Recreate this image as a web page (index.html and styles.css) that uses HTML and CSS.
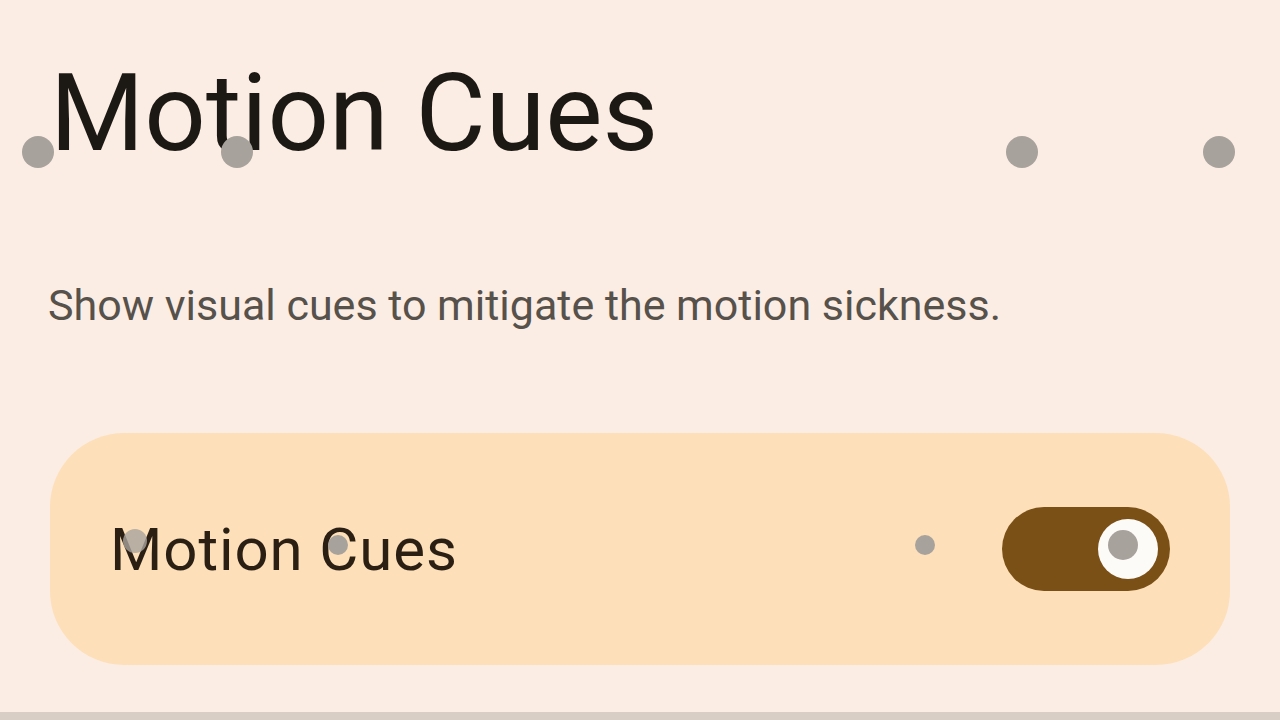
FILE: index.html
```html
<!DOCTYPE html>
<html lang="en">
<head>
    <meta charset="UTF-8">
    <meta name="viewport" content="width=device-width, initial-scale=1.0">
    <title>Motion Cues</title>
    <link rel="stylesheet" href="styles.css">
</head>
<body>
    <div class="screen">
        <h1 class="title">Motion Cues</h1>

        <p class="summary">Show visual cues to mitigate the motion sickness.</p>

        <div class="card">
            <span class="card-label">Motion Cues</span>
            <div class="switch on">
                <div class="knob"></div>
            </div>
        </div>

        <!-- motion cue dots drawn over the screen -->
        <span class="cue big" style="left: 38px; top: 152px"></span>
        <span class="cue big" style="left: 237px; top: 152px"></span>
        <span class="cue big" style="left: 1022px; top: 152px"></span>
        <span class="cue big" style="left: 1219px; top: 152px"></span>
        <span class="cue soft" style="left: 135px; top: 541px"></span>
        <span class="cue small" style="left: 338px; top: 545px"></span>
        <span class="cue small" style="left: 925px; top: 545px"></span>
        <span class="cue mid" style="left: 1123px; top: 545px"></span>
    </div>
    <div class="navbar"></div>
</body>
</html>
```

FILE: styles.css
```css
body {
    margin: 0;
    background: #fbede3;
    font-family: Roboto, "Noto Sans", sans-serif;
    overflow: hidden;
}
.screen {
    position: relative;
    height: 712px;
    padding: 0 50px;
    box-sizing: border-box;
}
.title {
    margin: 0;
    padding-top: 59px;
    font-size: 108px;
    line-height: 108px;
    font-weight: 400;
    color: #1c1814;
}
.summary {
    margin: 113px 0 0 -2px;
    font-size: 43px;
    line-height: 50px;
    color: #57514b;
}
.card {
    margin-top: 103px;
    height: 232px;
    border-radius: 74px;
    background: #fde0b9;
    display: flex;
    align-items: center;
    justify-content: space-between;
    padding: 0 60px;
}
.card-label {
    font-size: 60px;
    color: #2b1f13;
    letter-spacing: 0.9px;
}
.switch {
    width: 168px;
    height: 84px;
    border-radius: 42px;
    background: #7b5017;
    display: flex;
    align-items: center;
    justify-content: flex-end;
    padding: 0 12px;
    box-sizing: border-box;
}
.knob {
    width: 60px;
    height: 60px;
    border-radius: 50%;
    background: #fdfbf8;
}
.cue {
    position: absolute;
    border-radius: 50%;
    background: #a8a29d;
    transform: translate(-50%, -50%);
}
.cue.big {
    width: 32px;
    height: 32px;
}
.cue.mid {
    width: 30px;
    height: 30px;
}
.cue.soft {
    width: 24px;
    height: 24px;
    opacity: 0.8;
}
.cue.small {
    width: 20px;
    height: 20px;
}
.navbar {
    height: 8px;
    background: #d8cec6;
}
```
